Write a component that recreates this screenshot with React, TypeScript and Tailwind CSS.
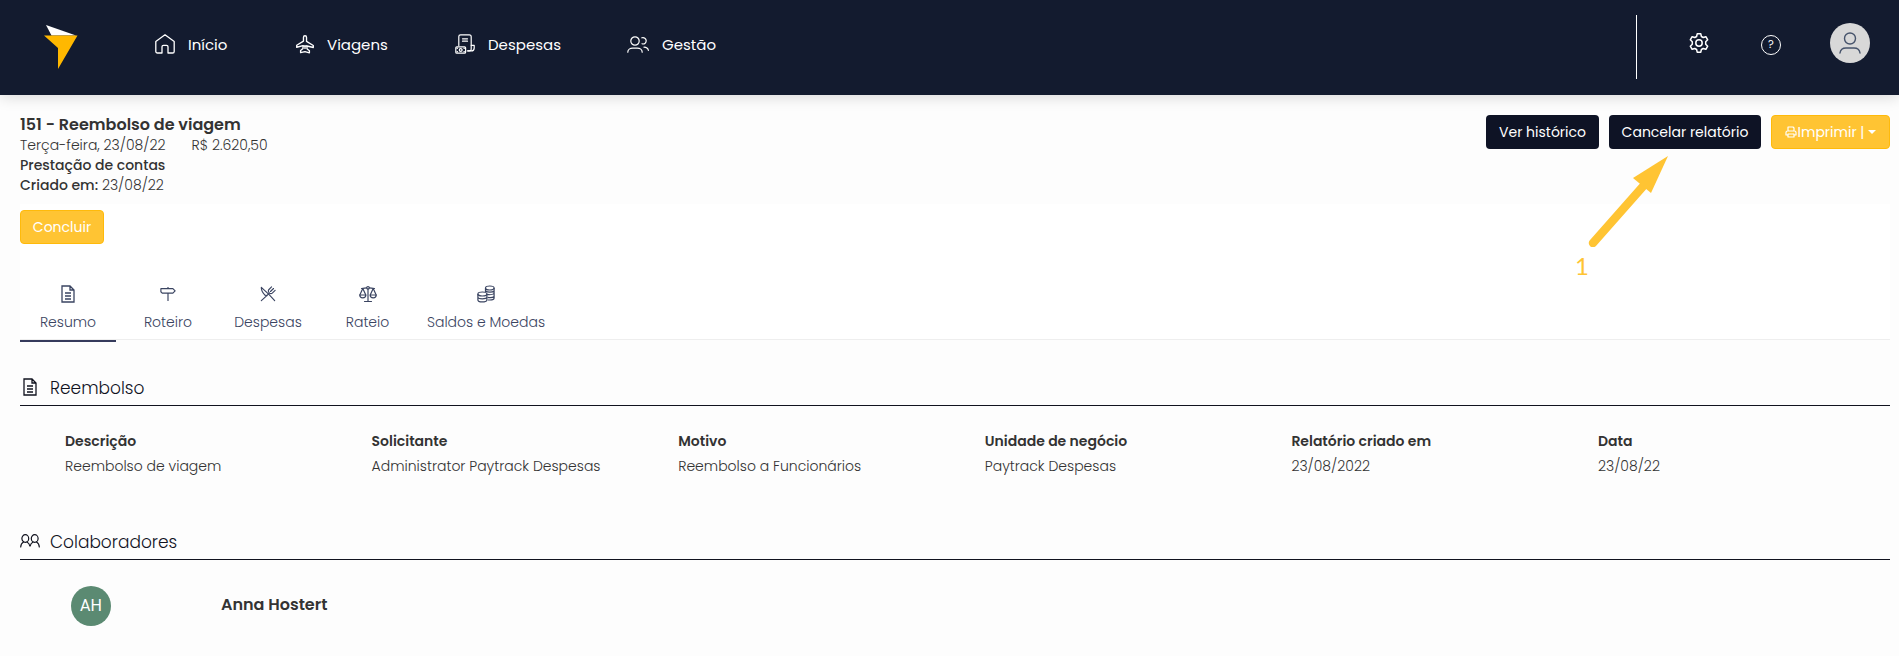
import React from 'react';

type IconProps = { className?: string };

const HomeIcon: React.FC<IconProps> = ({ className }) => (
  <svg viewBox="0 0 20 20" className={className} fill="none" stroke="currentColor" strokeWidth="1.3" strokeLinejoin="round">
    <path d="M.8 7.6 10 .8l9.200 6.800v9.800a1.600 1.600 0 0 1-1.600 1.600h-4.600v-6.200a1.500 1.500 0 0 0-1.500-1.500h-3A1.500 1.500 0 0 0 7 12.800V19H2.400A1.600 1.600 0 0 1 .8 17.400z" />
  </svg>
);

const PlaneIcon: React.FC<IconProps> = ({ className }) => (
  <svg viewBox="0 0 20 20" className={className} fill="none" stroke="currentColor" strokeWidth="1.5" strokeLinejoin="round">
    <path d="M10 .8c1.100 0 1.700.9 1.700 2v4.300l7.500 4.600v2.200l-7-1.700v3l2.700 2.300v2.300L10 18.400l-4.900 1.100v-2.300l2.700-2.300v-3l-7 1.700v-2.200l7.500-4.600V2.800c0-1.100.6-2 1.700-2z" />
    <path d="M7.800 12.200h4.400M10 12.200v3.300" />
  </svg>
);

const ExpenseIcon: React.FC<IconProps> = ({ className }) => (
  <svg viewBox="0 0 20 20" className={className} fill="none" stroke="currentColor" strokeWidth="1.200" strokeLinecap="round" strokeLinejoin="round">
    <path d="M3.800 11.500V2.600C3.800 1.300 4.600.8 5.600.8h8.700c1.200 0 1.900.8 1.900 1.900v12.500c0 1.100-.8 1.700-1.900 1.700h-2" />
    <path d="M16.200 11.300h3v2.600c0 1.800-1 3-3 3h-3M7.500 4.800h5M7.500 7.200h5" />
    <rect x=".8" y="12.800" width="9.800" height="6.400" rx="1" />
    <circle cx="5.700" cy="16" r="1.400" />
    <path d="M2.200 14.200h.1M9.100 14.200h.1M2.200 17.800h.1M9.100 17.800h.1" strokeWidth="1.600" />
  </svg>
);

const PeopleIcon: React.FC<IconProps> = ({ className }) => (
  <svg viewBox="0 0 22 17" className={className} fill="none" stroke="currentColor" strokeWidth="1.200" strokeLinecap="round">
    <circle cx="8" cy="5" r="4.200" />
    <path d="M.8 16.200c0-2.500 2.300-4 4.900-4h4.600c2.600 0 4.900 1.500 4.900 4M14.800 1.800c2.300-.7 4.400.7 4.400 3s-2 3.700-4.200 3M17 11.200c2.300 0 3.900 1.100 4.400 3.200" />
  </svg>
);

const GearIcon: React.FC<IconProps> = ({ className }) => (
  <svg viewBox="0 0 20 20" className={className} fill="none" stroke="currentColor" strokeWidth="1.500" strokeLinejoin="round">
    <path d="M8.200.8h3.600l.6 2.700 1.800 1 2.700-.8 1.800 3.100-2 1.900v2.600l2 1.900-1.800 3.100-2.700-.8-1.800 1-.6 2.700H8.200l-.6-2.700-1.800-1-2.700.8-1.800-3.100 2-1.900V8.700l-2-1.900 1.800-3.100 2.700.8 1.800-1z" />
    <circle cx="10" cy="10" r="3.200" />
  </svg>
);

const UserIcon: React.FC<IconProps> = ({ className }) => (
  <svg viewBox="0 0 22 22" className={className} fill="none" stroke="currentColor" strokeWidth="1.400" strokeLinecap="round">
    <circle cx="11" cy="6.500" r="5.500" />
    <path d="M1 21c.4-3.200 3-5 6-5h8c3 0 5.600 1.800 6 5" />
  </svg>
);

const DocIcon: React.FC<IconProps> = ({ className }) => (
  <svg viewBox="0 0 14 18" className={className} fill="none" stroke="currentColor" strokeWidth="1.300">
    <path d="M1 1h8l4 4v12H1zM9 1v4h4M4 8h6M4 11h6M4 14h6" />
  </svg>
);

const SignIcon: React.FC<IconProps> = ({ className }) => (
  <svg viewBox="0 0 18 18" className={className} fill="none" stroke="currentColor" strokeWidth="1.300" strokeLinejoin="round">
    <path d="M1 3h13.500L17 5.500 14.500 8H2.500L1 6.500zM9 1v2M9 8v9" />
  </svg>
);

const CutleryIcon: React.FC<IconProps> = ({ className }) => (
  <svg viewBox="0 0 18 18" className={className} fill="none" stroke="currentColor" strokeWidth="1.300" strokeLinecap="round" strokeLinejoin="round">
    <path d="M1.500 16.500 8 10.500M16.500 16.500 10 9.500M8 10.800l-2.500-.5C3 7.800 1.300 4.500 1.500 1.500L10 9.500" />
    <path d="M13 1 9.800 4.200C9 5.200 9.200 6.200 10 7.200l.8.800c1 .8 2 .8 3 0L17 5M15.200 2.800 11.800 6.200M10 8.500 8.500 10" />
  </svg>
);

const ScaleIcon: React.FC<IconProps> = ({ className }) => (
  <svg viewBox="0 0 18 18" className={className} fill="none" stroke="currentColor" strokeWidth="1.200" strokeLinecap="round" strokeLinejoin="round">
    <circle cx="9" cy="2.800" r="1.300" />
    <path d="M9 4.200v12.300M5.500 16.500h7M2.500 3.500C5 3.500 6 2.800 7.700 2.800M10.300 2.800c1.700 0 2.700.7 5.200.7M3.800 3.500.8 10M3.800 3.500 6.800 10M14.200 3.500l-3 6.500M14.200 3.500l3 6.500" />
    <path d="M.8 10h6c0 3.800-6 3.800-6 0zM11.200 10h6c0 3.800-6 3.800-6 0z" />
  </svg>
);

const CoinsIcon: React.FC<IconProps> = ({ className }) => (
  <svg viewBox="0 0 18 18" className={className} fill="none" stroke="currentColor" strokeWidth="1.200">
    <ellipse cx="12.800" cy="3" rx="4.300" ry="2" />
    <path d="M8.500 3v4M17.100 3v10c0 1.200-2 2-4.300 2h-2M8.700 6c1.400 1.600 7 1.600 8.400 0M10 9.300c2.400.6 6 .2 7.100-1M10.500 12.300c2.400.5 5.600.1 6.600-1" />
    <ellipse cx="5.400" cy="9" rx="4.500" ry="2" />
    <path d="M.9 9v6c0 2.600 9 2.600 9 0V9M.9 12c0 2.400 9 2.400 9 0" />
  </svg>
);

const TeamIcon: React.FC<IconProps> = ({ className }) => (
  <svg viewBox="0 0 20 14" className={className} fill="none" stroke="currentColor" strokeWidth="1.200" strokeLinecap="round">
    <ellipse cx="5.300" cy="4.500" rx="3.400" ry="3.800" />
    <ellipse cx="14.700" cy="4.500" rx="3.400" ry="3.800" />
    <path d="M.7 13c.1-2.500 1-4 2.800-5M7 8c1.600.8 2.600 2.500 3 4.500.4-2 1.400-3.700 3-4.500M16.500 8c1.800 1 2.700 2.500 2.800 5" />
  </svg>
);

const PrinterIcon: React.FC<IconProps> = ({ className }) => (
  <svg viewBox="0 0 12 12" className={className} fill="none" stroke="currentColor" strokeWidth="1.200" strokeLinejoin="round">
    <path d="M3 5V1h5l1 1v3M3 9H1V6.500C1 5.500 1.500 5 2.500 5h7c1 0 1.500.5 1.500 1.500V9H9M3 8h6v3H3z" />
  </svg>
);

const navItems = [
  { name: 'Início', icon: HomeIcon, size: 'w-5 h-5', width: 'w-[141px]' },
  { name: 'Viagens', icon: PlaneIcon, size: 'w-[18px] h-5', width: 'w-[159px]' },
  { name: 'Despesas', icon: ExpenseIcon, size: 'w-5 h-5', width: 'w-[172px]' },
  { name: 'Gestão', icon: PeopleIcon, size: 'w-[22px] h-[17px]', width: '' },
];

const tabs = [
  { name: 'Resumo', icon: DocIcon, size: 'w-[14px] h-[18px]', width: 'w-24' },
  { name: 'Roteiro', icon: SignIcon, size: 'w-4 h-[18px]', width: 'w-[104px]' },
  { name: 'Despesas', icon: CutleryIcon, size: 'w-4 h-[18px]', width: 'w-24' },
  { name: 'Rateio', icon: ScaleIcon, size: 'w-[18px] h-[18px]', width: 'w-[103px]' },
  { name: 'Saldos e Moedas', icon: CoinsIcon, size: 'w-[18px] h-[18px]', width: 'w-[134px]' },
];

const fields = [
  { label: 'Descrição', value: 'Reembolso de viagem' },
  { label: 'Solicitante', value: 'Administrator Paytrack Despesas' },
  { label: 'Motivo', value: 'Reembolso a Funcionários' },
  { label: 'Unidade de negócio', value: 'Paytrack Despesas' },
  { label: 'Relatório criado em', value: '23/08/2022' },
  { label: 'Data', value: '23/08/22' },
];

const Header: React.FC = () => (
  <header className="relative h-[95px] pb-[2px] bg-[#131b2f] text-white flex items-center justify-between shadow-[0_2px_14px_rgba(0,0,0,0.15)]">
    <div className="flex items-center">
      <a href="#" aria-label="Paytrack" className="ml-11 w-[111px]">
        <svg viewBox="0 0 34 44" className="w-[34px] h-11">
          <path d="M2 0 32 10.500H7.500z" fill="#fff" />
          <path d="M0 10.500h33.500L14 44V23z" fill="#ffb800" />
        </svg>
      </a>
      <nav className="flex pb-1">
        {navItems.map(({ name, icon: Icon, size, width }) => (
          <a key={name} href="#" className={`flex items-center gap-[13px] text-[15px] ${width}`}>
            <Icon className={size} />
            {name}
          </a>
        ))}
      </nav>
    </div>
    <div className="flex items-center pr-[29px]">
      <div className="w-px h-16 bg-white" />
      <button aria-label="Configurações" className="ml-[52px] mb-2">
        <GearIcon className="w-5 h-5" />
      </button>
      <button aria-label="Ajuda" className="ml-[52px] mb-1 w-5 h-5 rounded-full border border-white text-[11px] leading-none">
        ?
      </button>
      <button aria-label="Perfil" className="ml-[49px] mb-2 w-10 h-10 rounded-full bg-[#d8d8d8] text-[#46536b] flex items-center justify-center">
        <UserIcon className="w-[22px] h-[22px]" />
      </button>
    </div>
  </header>
);

const SectionTitle: React.FC<{ icon: React.FC<IconProps>; size: string; title: string }> = ({ icon: Icon, size, title }) => (
  <h2 className="flex items-center h-8 pb-[2px] border-b border-[#11131f] text-[17px] font-light text-[#11131f]">
    <span className="w-[30px] pb-1">
      <Icon className={size} />
    </span>
    {title}
  </h2>
);

export default function App() {
  return (
    <div className="min-h-screen bg-[#fdfdfd] text-[#333] text-sm font-['Poppins','Inter',sans-serif]">
      <Header />

      <main className="pl-5 pr-[9px]">
        <div className="flex justify-between pt-5 h-[109px]">
          <div className="leading-5">
            <h1 className="text-base leading-5 font-semibold">151 - Reembolso de viagem</h1>
            <p className="font-light">
              <span className="mr-[26px]">Terça-feira, 23/08/22</span>R$ 2.620,50
            </p>
            <p className="font-medium">Prestação de contas</p>
            <p className="font-light">
              <span className="font-medium">Criado em:</span> 23/08/22
            </p>
          </div>
          <div className="relative flex items-start gap-[10px]">
            <button className="w-[113px] h-[34px] rounded bg-[#0e1325] text-white">Ver histórico</button>
            <button className="w-[152px] h-[34px] rounded bg-[#0e1325] text-white">Cancelar relatório</button>
            <button className="w-[119px] h-[34px] rounded bg-[#ffc433] border border-[#ffba0a] text-white flex items-center justify-center">
              <PrinterIcon className="w-3 h-3 mr-px" />
              Imprimir |
              <span className="ml-1 border-x-4 border-t-4 border-x-transparent border-t-white" />
            </button>
            {/* step marker pointing at the cancel button */}
            <svg viewBox="0 0 90 92" className="absolute left-[100px] top-[40px] w-[90px] h-[92px] pointer-events-none">
              <path d="M7 88 60 28" stroke="#ffc433" strokeWidth="8.500" strokeLinecap="round" />
              <path d="M82 1 65 38 47 23z" fill="#ffc433" />
            </svg>
            <span className="absolute left-[89px] top-[137px] text-2xl leading-7 text-[#ffc433] font-['Lato',sans-serif]">1</span>
          </div>
        </div>

        <div className="bg-white pt-[6px] border-b border-[#eee]">
          <button className="w-[84px] h-[34px] rounded bg-[#ffc433] border border-[#ffba0a] text-white">Concluir</button>
          <div role="tablist" className="flex mt-6 text-[#3a4461]">
            {tabs.map(({ name, icon: Icon, size, width }, i) => (
              <button
                key={name}
                role="tab"
                aria-selected={i === 0}
                className={`h-[74px] -mb-[3px] pt-[17px] flex flex-col items-center gap-[9px] font-light whitespace-nowrap ${width} ${
                  i === 0 ? 'border-b-2 border-[#353b5c]' : ''
                }`}
              >
                <Icon className={size} />
                {name}
              </button>
            ))}
          </div>
        </div>

        <section className="pt-[34px]">
          <SectionTitle icon={DocIcon} size="w-[14px] h-[18px] ml-[3px]" title="Reembolso" />
          <dl className="grid grid-cols-[repeat(5,16.8%)_1fr] pl-[45px] pt-[23px] h-[122px]">
            {fields.map((f) => (
              <div key={f.label}>
                <dt className="font-semibold leading-6">{f.label}</dt>
                <dd className="font-light leading-6 mt-px">{f.value}</dd>
              </div>
            ))}
          </dl>
        </section>

        <section>
          <SectionTitle icon={TeamIcon} size="w-5 h-[14px]" title="Colaboradores" />
          <div className="flex items-center pl-[51px] pt-[26px]">
            <div className="w-10 h-10 rounded-full bg-[#5b8a72] text-white text-base flex items-center justify-center font-['Roboto',sans-serif]">
              AH
            </div>
            <p className="ml-[110px] pb-[2px] text-base font-semibold">Anna Hostert</p>
          </div>
        </section>
      </main>
    </div>
  );
}
